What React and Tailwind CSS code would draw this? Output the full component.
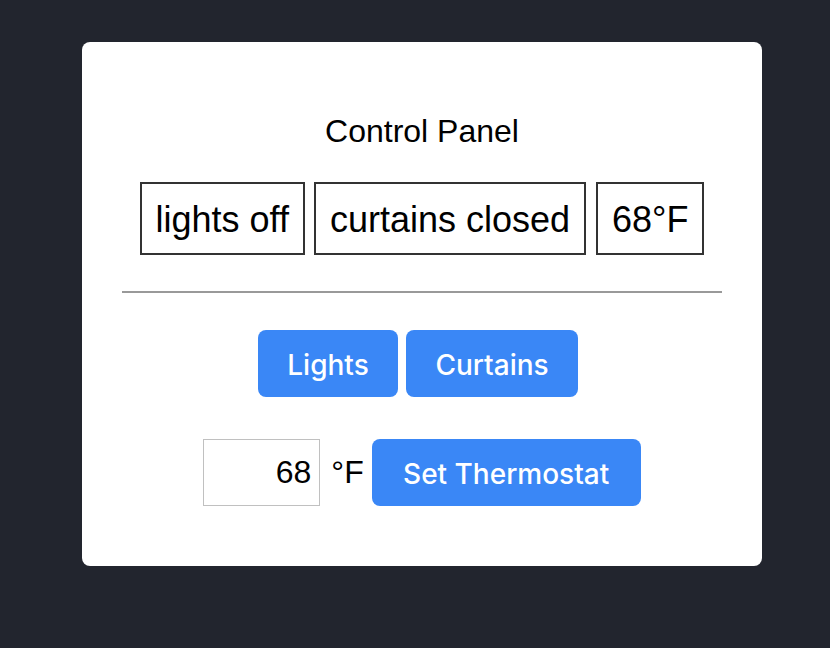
import React, { useState } from 'react';

const statusBox = 'border-2 border-[#333] px-[14px] pt-[15px] pb-[13px] text-[36px] leading-[41px] text-black';
const blueBtn = 'h-[67px] pt-[3px] rounded-[8px] bg-[#3a87f6] text-white text-[28px] font-medium font-[Inter,sans-serif]';

export default function App() {
    const [lights] = useState(false);
    const [curtains] = useState(false);
    const [temp, setTemp] = useState('68');

    return (
        <div className="min-h-[648px] w-full bg-[#22252e] pt-[42px] font-['Liberation_Sans',Arial,sans-serif]">
            <div className="ml-[82px] w-[680px] rounded-[8px] bg-white px-[40px] pt-[71px] pb-[60px] flex flex-col items-center">
                <h1 className="text-[32px] leading-[37px] text-black">Control Panel</h1>

                {/* status readout */}
                <div className="mt-[32px] flex gap-[9px]">
                    <div className={statusBox}>{lights ? 'lights on' : 'lights off'}</div>
                    <div className={statusBox}>{curtains ? 'curtains open' : 'curtains closed'}</div>
                    <div className={statusBox + ' ml-[1px]'}>68°F</div>
                </div>

                <hr className="mt-[36px] w-full border-0 h-[2px] bg-[#999]" />

                <div className="mt-[37px] flex gap-[8px] pr-[8px]">
                    <button className={blueBtn + ' w-[140px]'}>Lights</button>
                    <button className={blueBtn + ' w-[172px]'}>Curtains</button>
                </div>

                <div className="mt-[41px] flex items-center">
                    <input
                        value={temp}
                        onChange={(e) => setTemp(e.target.value)}
                        className="w-[117px] h-[67px] mt-[1px] border border-[#c0c0c0] text-right pr-[8px] text-[32px] text-black outline-none"
                    />
                    <span className="ml-[11px] text-[32px] text-black">°F</span>
                    <button className={blueBtn + ' ml-[8px] w-[269px]'}>Set Thermostat</button>
                </div>
            </div>
        </div>
    );
}
